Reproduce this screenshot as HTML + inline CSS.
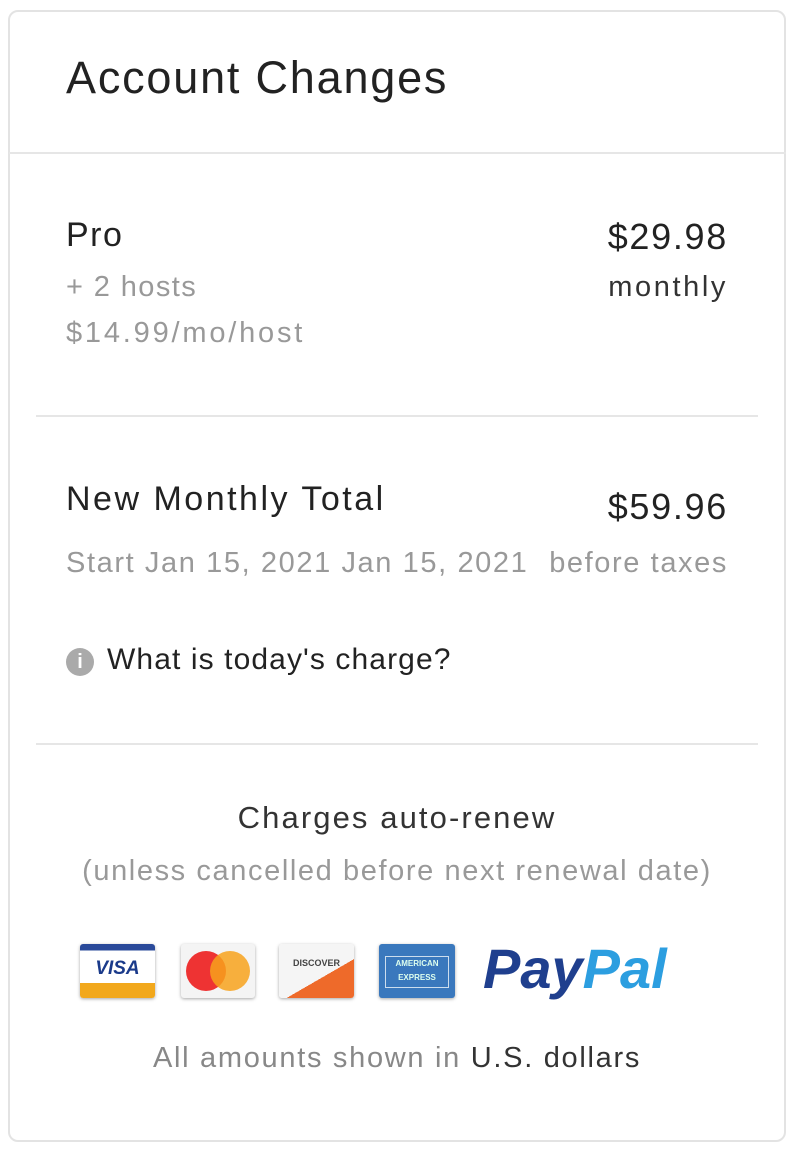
<!DOCTYPE html>
<html><head><style>
body{margin:0;background:#fff;font-family:"Liberation Sans",sans-serif;}
.card{position:absolute;left:8px;top:10px;width:778px;height:1132px;border:2px solid #e3e3e3;border-radius:10px;box-sizing:border-box;}
.t{position:absolute;white-space:nowrap;}
.hr{position:absolute;height:2px;background:#e6e6e6;}
.ic{position:absolute;top:944px;height:54px;border-radius:3px;box-shadow:0 1px 3px rgba(0,0,0,.35);overflow:hidden;}
</style></head><body>
<div class="card"></div>
<div class="t" style="left:66px;top:52px;font-size:45px;color:#222;letter-spacing:1.8px">Account Changes</div>
<div class="hr" style="left:9px;width:777px;top:152px"></div>
<div class="t" style="left:66px;top:216px;font-size:34px;color:#222;letter-spacing:1.5px">Pro</div>
<div class="t" style="left:66px;top:271px;font-size:29px;color:#999;letter-spacing:1.4px">+ 2 hosts</div>
<div class="t" style="left:66px;top:317px;font-size:29px;color:#999;letter-spacing:2.8px">$14.99/mo/host</div>
<div class="t" style="right:72px;top:216px;font-size:36px;color:#222;letter-spacing:1.7px">$29.98</div>
<div class="t" style="right:72px;top:271px;font-size:29px;color:#333;letter-spacing:2.6px">monthly</div>
<div class="hr" style="left:36px;width:722px;top:415px"></div>
<div class="t" style="left:66px;top:480px;font-size:34px;color:#222;letter-spacing:2.5px">New Monthly Total</div>
<div class="t" style="right:72px;top:486px;font-size:36px;color:#222;letter-spacing:1.7px">$59.96</div>
<div class="t" style="left:66px;top:547px;font-size:29px;color:#999;letter-spacing:1.6px">Start Jan 15, 2021 Jan 15, 2021</div>
<div class="t" style="right:72px;top:547px;font-size:29px;color:#999;letter-spacing:1.6px">before taxes</div>
<div class="t" style="left:66px;top:648px;width:28px;height:28px;border-radius:50%;background:#aaa;color:#fff;font-size:20px;font-weight:bold;text-align:center;line-height:28px">i</div>
<div class="t" style="left:107px;top:643px;font-size:30px;color:#222;letter-spacing:1.1px">What is today's charge?</div>
<div class="hr" style="left:36px;width:722px;top:743px"></div>
<div class="t" style="left:0;width:794px;text-align:center;top:800px;font-size:31px;color:#333;letter-spacing:2.1px">Charges auto-renew</div>
<div class="t" style="left:0;width:794px;text-align:center;top:855px;font-size:29px;color:#999;letter-spacing:1.6px">(unless cancelled before next renewal date)</div>
<div class="ic" style="left:80px;width:75px;background:linear-gradient(#2a4a9a 0 12%,#fff 12% 72%,#f2a81c 72%)"><div style="text-align:center;margin-top:14px;font:italic bold 19px 'Liberation Sans';color:#1a3a8a">VISA</div></div>
<div class="ic" style="left:181px;width:74px;background:#f4f4f4"><div style="position:absolute;left:5px;top:7px;width:40px;height:40px;border-radius:50%;background:#e33"></div><div style="position:absolute;left:29px;top:7px;width:40px;height:40px;border-radius:50%;background:#f7a21c;opacity:.85"></div></div>
<div class="ic" style="left:279px;width:75px;background:linear-gradient(150deg,#f5f5f5 60%,#ee6a2a 60%)"><div style="text-align:center;margin-top:14px;font:bold 9px 'Liberation Sans';color:#444">DISCOVER</div></div>
<div class="ic" style="left:379px;width:76px;background:#3a78bd"><div style="margin:12px 6px;height:30px;border:1px solid #cde;color:#dfe;font:bold 8px 'Liberation Sans';text-align:center;line-height:14px">AMERICAN<br>EXPRESS</div></div>
<div class="t" style="left:483px;top:936px;font:italic bold 56px 'Liberation Sans';letter-spacing:0px"><span style="color:#1f3f8e">Pay</span><span style="color:#2c9ee0">Pal</span></div>
<div class="t" style="left:0;width:794px;text-align:center;top:1042px;font-size:29px;color:#888;letter-spacing:1.7px">All amounts shown in <span style="color:#333">U.S. dollars</span></div>
</body></html>
